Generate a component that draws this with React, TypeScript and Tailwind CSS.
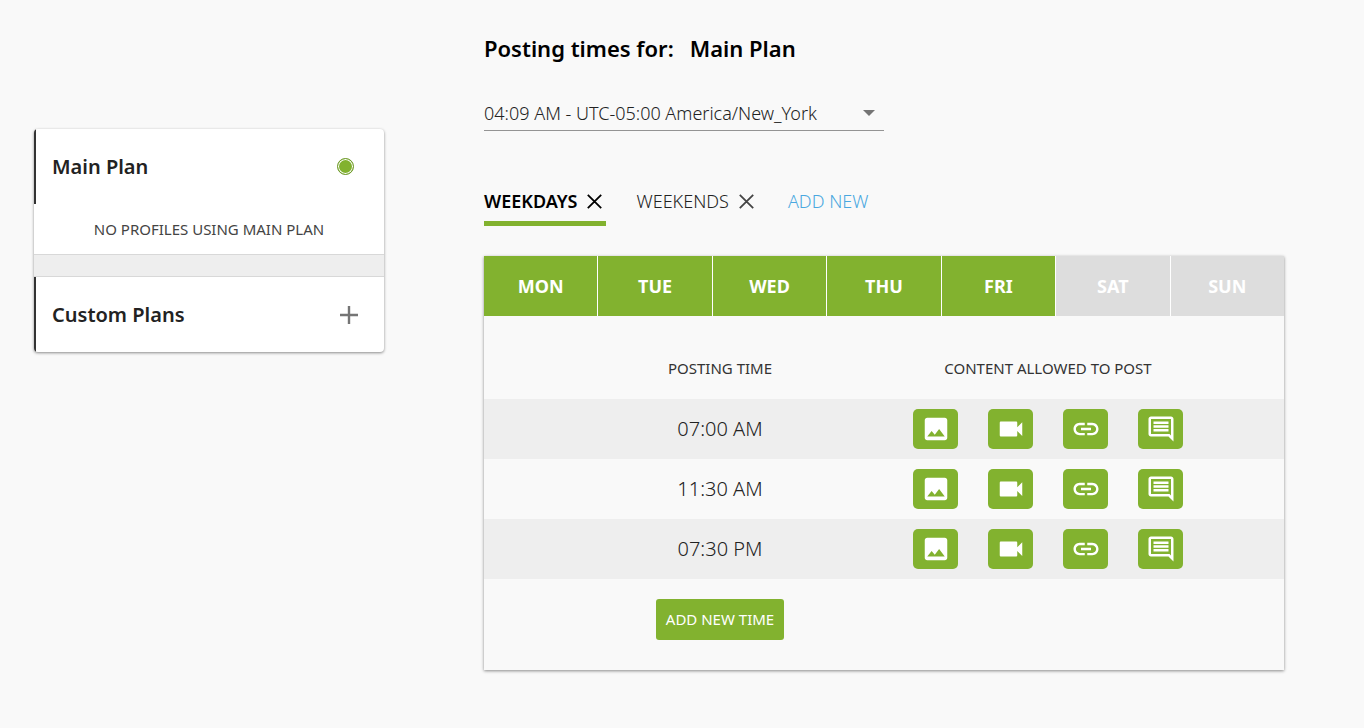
import { useState } from "react";

const days = ["MON", "TUE", "WED", "THU", "FRI", "SAT", "SUN"];
const times = ["07:00 AM", "11:30 AM", "07:30 PM"];

const contentTypes = [
  {
    name: "Images",
    path: "M21 19V5c0-1.1-.9-2-2-2H5c-1.1 0-2 .9-2 2v14c0 1.1.9 2 2 2h14c1.1 0 2-.9 2-2zM8.5 13.5l2.5 3.01L14.5 12l4.5 6H5l3.5-4.5z",
  },
  {
    name: "Videos",
    path: "M17 10.5V7c0-.55-.45-1-1-1H4c-.55 0-1 .45-1 1v10c0 .55.45 1 1 1h12c.55 0 1-.45 1-1v-3.5l4 4v-11l-4 4z",
  },
  {
    name: "Links",
    path: "M3.9 12c0-1.71 1.39-3.1 3.1-3.1h4V7H7c-2.76 0-5 2.24-5 5s2.24 5 5 5h4v-1.9H7c-1.71 0-3.1-1.39-3.1-3.1zM8 13h8v-2H8v2zm9-6h-4v1.9h4c1.71 0 3.1 1.39 3.1 3.1s-1.39 3.1-3.1 3.1h-4V17h4c2.76 0 5-2.24 5-5s-2.24-5-5-5z",
  },
  {
    name: "Text",
    path: "M21.99 4c0-1.1-.89-2-1.99-2H4c-1.1 0-2 .9-2 2v12c0 1.1.9 2 2 2h14l4 4-.01-18zM20 4v13.17L18.83 16H4V4h16zM6 12h12v2H6zm0-3h12v2H6zm0-3h12v2H6z",
  },
];

function Cross() {
  return (
    <svg viewBox="0 0 15 15" className="size-[15px]" fill="none" stroke="currentColor" strokeWidth="1.8" aria-hidden="true">
      <path d="M.8.8 14.2 14.2M14.2.8.8 14.2" />
    </svg>
  );
}

function PlanCard() {
  const [selected, setSelected] = useState(true);
  return (
    <aside className="mt-[129px] w-[350px] shrink-0 self-start overflow-hidden rounded-sm bg-white shadow-[0_1px_3px_rgba(0,0,0,0.45)]">
      <div className="flex h-[75px] items-center justify-between border-l-2 border-[#333] pr-[30px] pl-4">
        <h2 className="text-xl font-semibold text-[#222]">
          <label htmlFor="main-plan">Main Plan</label>
        </h2>
        <input
          id="main-plan"
          type="radio"
          name="plan"
          checked={selected}
          onChange={() => setSelected(true)}
          className="size-[17px] appearance-none rounded-full border border-[#6f9a2c] bg-[#82b22f] shadow-[inset_0_0_0_1px_white]"
        />
      </div>
      <p className="flex h-[50px] items-center justify-center text-[15px] text-[#444]">
        NO PROFILES USING MAIN PLAN
      </p>
      <div className="h-[23px] border-y border-[#d8d8d8] bg-[#eee]" />
      <div className="flex h-[75px] items-center justify-between border-l-2 border-[#333] pr-[26px] pl-4">
        <h2 className="text-xl font-semibold text-[#222]">Custom Plans</h2>
        <button type="button" aria-label="Add custom plan" className="text-[#757575]">
          <svg viewBox="0 0 18 18" className="size-[18px]" fill="none" stroke="currentColor" strokeWidth="2.4" aria-hidden="true">
            <path d="M9 0v18M0 9h18" />
          </svg>
        </button>
      </div>
    </aside>
  );
}

export default function App() {
  const [active, setActive] = useState(["MON", "TUE", "WED", "THU", "FRI"]);
  const toggle = (day: string) =>
    setActive((list) => (list.includes(day) ? list.filter((d) => d !== day) : [...list, day]));

  return (
    <div className="flex min-h-screen gap-[100px] bg-[#f9f9f9] pr-20 pl-[34px] font-['Noto_Sans',sans-serif] text-[#222]">
      <PlanCard />
      <main className="min-w-0 flex-1 pt-8 pb-10">
        <h1 className="flex gap-4 text-[22px] leading-8 font-semibold text-black">
          <span>Posting times for:</span>
          <span>Main Plan</span>
        </h1>

        <div className="relative mt-8 w-[400px]">
          <select
            aria-label="Time zone"
            className="h-[35px] w-full appearance-none border-b border-[#949494] pr-8 text-lg font-light text-[#222]"
          >
            <option>04:09 AM - UTC-05:00 America/New_York</option>
          </select>
          <svg viewBox="0 0 12 6" className="pointer-events-none absolute top-3.5 right-[9px] h-1.5 w-3" fill="#757575" aria-hidden="true">
            <path d="M0 0h12L6 6z" />
          </svg>
        </div>

        <nav className="mt-[50px] flex gap-[30px] text-lg leading-6">
          <div className="flex h-[45px] items-start gap-2.5 border-b-[5px] border-[#82b22f] pt-2 pr-1">
            <button type="button" className="font-semibold text-black">WEEKDAYS</button>
            <button type="button" aria-label="Remove weekdays" className="flex h-6 items-center text-black">
              <Cross />
            </button>
          </div>
          <div className="flex h-[45px] items-start gap-2.5 pt-2 pr-1">
            <button type="button" className="font-light">WEEKENDS</button>
            <button type="button" aria-label="Remove weekends" className="flex h-6 items-center text-[#444]">
              <Cross />
            </button>
          </div>
          <button type="button" className="flex h-[45px] items-start pt-2 font-light text-[#4aa8e0]">ADD NEW</button>
        </nav>

        <section className="mt-[30px] pb-[30px] shadow-[0_1px_3px_rgba(0,0,0,0.45)]">
          <div className="flex gap-px bg-white">
            {days.map((day) => (
              <button
                key={day}
                type="button"
                aria-pressed={active.includes(day)}
                onClick={() => toggle(day)}
                className={`h-[60px] flex-1 text-lg font-bold text-white ${active.includes(day) ? "bg-[#82b22f]" : "bg-[#ddd]"}`}
              >
                {day}
              </button>
            ))}
          </div>

          <table className="w-full table-fixed">
            <colgroup>
              <col className="w-[9%]" />
              <col className="w-[41%]" />
              <col className="w-[41%]" />
              <col className="w-[9%]" />
            </colgroup>
            <thead>
              <tr className="h-[83px] text-[15px] text-[#333]">
                <td />
                <th scope="col" className="pt-[22px] font-normal">POSTING TIME</th>
                <th scope="col" className="pt-[22px] font-normal">CONTENT ALLOWED TO POST</th>
                <td />
              </tr>
            </thead>
            <tbody>
              {times.map((time) => (
                <tr key={time} className="h-[60px] odd:bg-[#eee]">
                  <td />
                  <td className="text-center text-xl font-light">{time}</td>
                  <td>
                    <div className="flex justify-center gap-[30px]">
                      {contentTypes.map((type) => (
                        <button
                          key={type.name}
                          type="button"
                          aria-label={`${type.name} at ${time}`}
                          className="flex h-10 w-[45px] items-center justify-center rounded-[5px] bg-[#82b22f] text-white"
                        >
                          <svg viewBox="0 0 24 24" className="size-[30px]" fill="currentColor" aria-hidden="true">
                            <path d={type.path} />
                          </svg>
                        </button>
                      ))}
                    </div>
                  </td>
                  <td />
                </tr>
              ))}
            </tbody>
            <tfoot>
              <tr>
                <td />
                <td className="pt-5 text-center">
                  <button type="button" className="h-[41px] rounded-[3px] bg-[#82b22f] px-2.5 text-[15px] text-white">
                    ADD NEW TIME
                  </button>
                </td>
                <td />
                <td />
              </tr>
            </tfoot>
          </table>
        </section>
      </main>
    </div>
  );
}
